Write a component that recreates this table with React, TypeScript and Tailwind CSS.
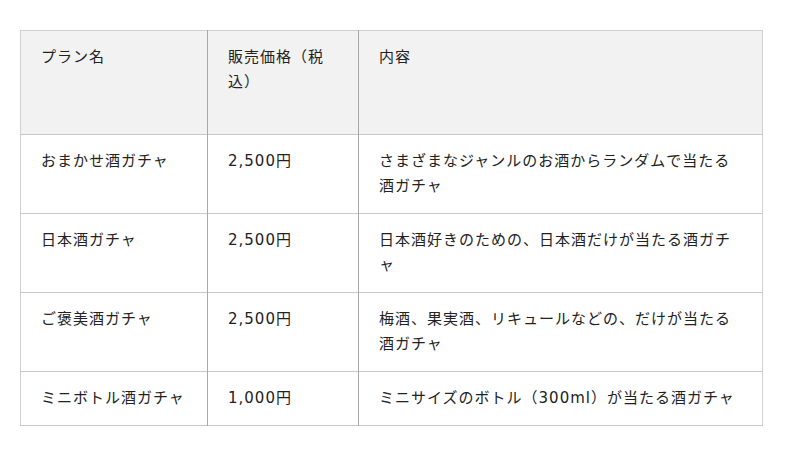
import React from "react";

const rows = [
  { name: "おまかせ酒ガチャ", price: "2,500円", desc: "さまざまなジャンルのお酒からランダムで当たる酒ガチャ" },
  { name: "日本酒ガチャ", price: "2,500円", desc: "日本酒好きのための、日本酒だけが当たる酒ガチャ" },
  { name: "ご褒美酒ガチャ", price: "2,500円", desc: "梅酒、果実酒、リキュールなどの、だけが当たる酒ガチャ" },
  { name: "ミニボトル酒ガチャ", price: "1,000円", desc: "ミニサイズのボトル（300ml）が当たる酒ガチャ" },
];

export default function App() {
  return (
    <div
      className="w-[800px] h-[456px] bg-white pt-[30px] pl-[20px] text-[#222] text-[15px] leading-[25px] tracking-[1px]"
      style={{ fontFamily: '"DejaVu Sans", "Noto Sans CJK JP", sans-serif' }}
    >
      <table className="w-[742px] table-fixed border-collapse border border-[#d0d0d0]">
        <colgroup>
          <col className="w-[187px]" />
          <col className="w-[151px]" />
          <col className="w-[404px]" />
        </colgroup>
        <thead>
          <tr className="h-[104px] bg-[#f2f2f2] border-b border-[#c8c8c8]">
            <th className="align-top text-left font-normal pl-[20px] pr-[20px] pt-[14px] border-r border-[#a8a8a8]">プラン名</th>
            <th className="align-top text-left font-normal pl-[20px] pr-[21px] pt-[14px] border-r border-[#a8a8a8]">販売価格（税込）</th>
            <th className="align-top text-left font-normal pl-[20px] pr-[20px] pt-[14px]">内容</th>
          </tr>
        </thead>
        <tbody>
          {rows.map((r) => (
            <tr key={r.name} className="border-b border-[#c8c8c8]">
              <td className="align-top pl-[20px] pr-[10px] pt-[14px] pb-[14px] border-r border-[#a8a8a8]">{r.name}</td>
              <td className="align-top pl-[20px] pr-[10px] pt-[14px] pb-[14px] border-r border-[#a8a8a8]">{r.price}</td>
              <td className="align-top pl-[20px] pr-[22px] pt-[14px] pb-[14px]">{r.desc}</td>
            </tr>
          ))}
        </tbody>
      </table>
    </div>
  );
}
